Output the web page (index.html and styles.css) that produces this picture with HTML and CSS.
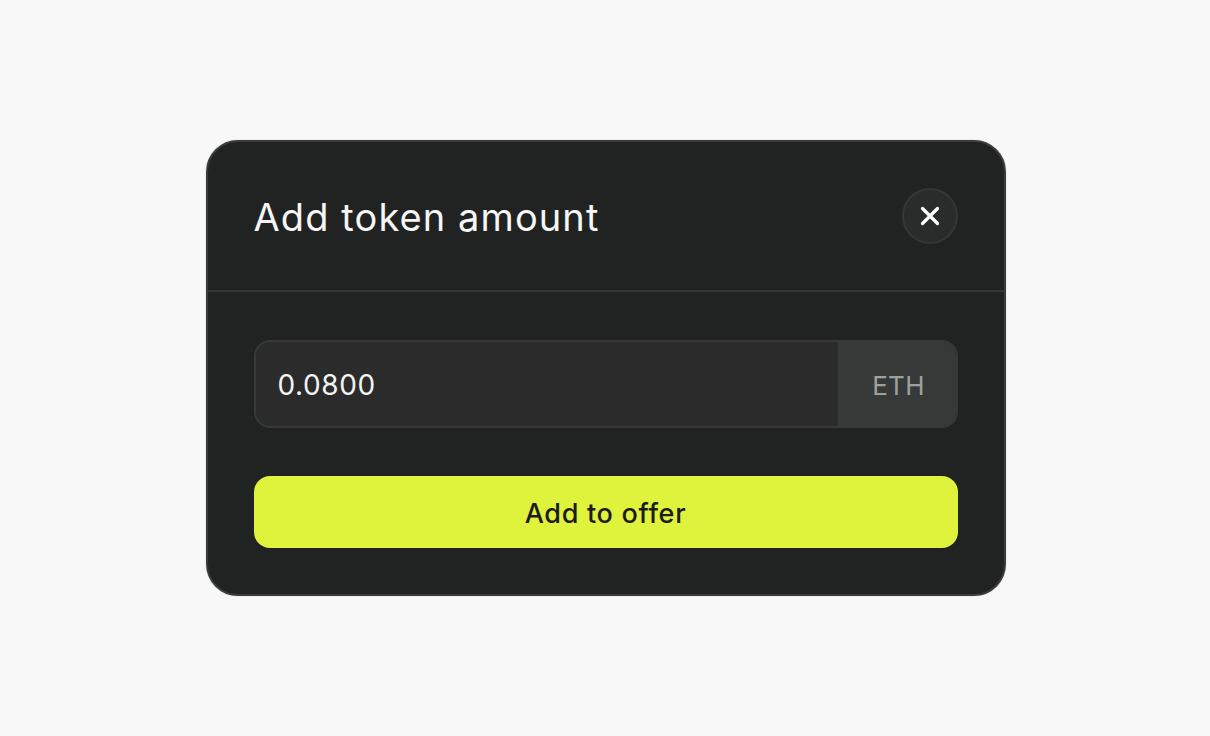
FILE: index.html
```html
<!DOCTYPE html>
<html lang="en">
<head>
<meta charset="utf-8">
<title>Add token amount</title>
<link rel="stylesheet" href="styles.css">
</head>
<body>
<div class="page">
  <div class="modal">
    <div class="modal-header">
      <h2 class="modal-title">Add token amount</h2>
      <button class="close-btn" aria-label="Close">
        <svg width="20" height="20" viewBox="0 0 20 20" fill="none"><path d="M2.5 2.5L17.5 17.5M17.5 2.5L2.5 17.5" stroke="#ffffff" stroke-width="3.2" stroke-linecap="round"/></svg>
      </button>
    </div>
    <div class="modal-body">
      <div class="amount-field">
        <div class="amount-value">0.0800</div>
        <div class="amount-unit">ETH</div>
      </div>
      <button class="primary-btn">Add to offer</button>
    </div>
  </div>
</div>
</body>
</html>
```
FILE: styles.css
```css
* { box-sizing: border-box; }
html, body { margin: 0; padding: 0; }
body {
  background: #f8f8f8;
  font-family: Inter, "Noto Sans", "Liberation Sans", sans-serif;
}
.page {
  width: 1210px;
  height: 736px;
  display: flex;
  align-items: center;
  justify-content: center;
}
.modal {
  width: 800px;
  height: 456px;
  background: #212322;
  border: 2px solid #3a3c3b;
  border-radius: 32px;
  display: flex;
  flex-direction: column;
  box-shadow: 0 0 2px rgba(0,0,0,0.15);
  margin-left: 1px;
}
.modal-header {
  height: 150px;
  flex-shrink: 0;
  display: flex;
  align-items: center;
  justify-content: space-between;
  padding: 0 46px 0 46px;
  border-bottom: 2px solid #343635;
}
.modal-title {
  margin: 0;
  font-size: 38px;
  font-weight: 400;
  color: #f5f6f5;
  letter-spacing: 1.1px;
  padding-top: 2px;
}
.close-btn {
  width: 56px;
  height: 56px;
  border-radius: 50%;
  background: #2a2c2b;
  border: 2px solid #353736;
  display: flex;
  align-items: center;
  justify-content: center;
  padding: 0;
  margin-right: 0;
}
.modal-body {
  flex: 1;
  padding: 48px 46px 46px;
  display: flex;
  flex-direction: column;
  gap: 48px;
}
.amount-field {
  height: 88px;
  flex-shrink: 0;
  display: flex;
  border: 2px solid #373938;
  border-radius: 16px;
  background: #2a2b2a;
  overflow: hidden;
}
.amount-value {
  flex: 1;
  display: flex;
  align-items: center;
  padding-left: 22px;
  padding-top: 2px;
  font-size: 28px;
  letter-spacing: 0.6px;
  color: #f2f3f2;
}
.amount-unit {
  width: 118px;
  display: flex;
  align-items: center;
  justify-content: center;
  padding-top: 3px;
  padding-left: 4px;
  background: #373938;
  color: #9da19e;
  font-size: 26px;
  letter-spacing: 0.3px;
}
.primary-btn {
  height: 72px;
  flex-shrink: 0;
  border: none;
  border-radius: 16px;
  background: #dff23c;
  color: #1b1c1b;
  font-family: inherit;
  font-size: 27px;
  font-weight: 500;
  letter-spacing: 0.7px;
  padding: 2px 0 0;
}
```
